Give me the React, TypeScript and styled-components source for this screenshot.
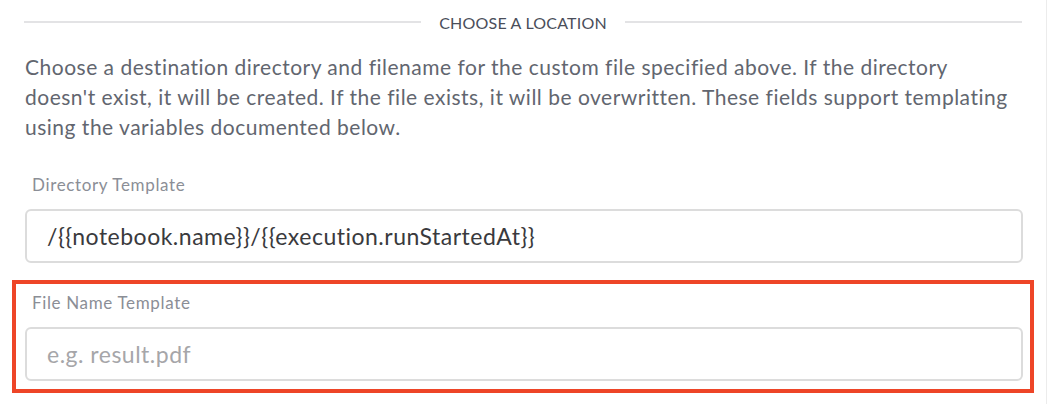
import React from "react";
import styled, { createGlobalStyle } from "styled-components";

const Global = createGlobalStyle`
  html, body { margin: 0; padding: 0; background: #ffffff; }
  body { font-family: "Lato", "Noto Sans", sans-serif; }
  * { box-sizing: border-box; }
`;

const Page = styled.div`
  width: 1047px;
  height: 404px;
  border-right: 1px solid #ececec;
  padding: 12px 24px 0 24px;
  display: flex;
  flex-direction: column;
`;

const SectionHeading = styled.div`
  display: flex;
  align-items: center;
  gap: 18px;
  height: 20px;
  &::before,
  &::after {
    content: "";
    flex: 1;
    height: 2px;
    background: #e3e3e5;
  }
`;

const HeadingText = styled.span`
  font-size: 16px;
  letter-spacing: 0.2px;
  color: #4a4e5a;
  text-transform: uppercase;
  white-space: nowrap;
`;

const Description = styled.p`
  margin: 20px 0 0 1px;
  max-width: 992px;
  font-size: 21px;
  letter-spacing: 0.5px;
  line-height: 30px;
  color: #62666f;
`;

const Fields = styled.div`
  display: flex;
  flex-direction: column;
  gap: 29px;
  margin-top: 32px;
`;

const Field = styled.div<{ $highlight?: boolean }>`
  display: flex;
  flex-direction: column;
  gap: 13px;
  outline: ${(p) => (p.$highlight ? "4px solid #ee4527" : "none")};
  outline-offset: 8px;
`;

const Label = styled.label`
  padding-left: 8px;
  font-size: 17px;
  letter-spacing: 0.65px;
  line-height: 22px;
  color: #8b8e96;
`;

const Input = styled.input`
  width: 100%;
  height: 54px;
  margin-left: 1px;
  padding: 0 20px;
  border: 2px solid #dcdcdc;
  border-radius: 6px;
  font-family: "Lato", "Noto Sans", sans-serif;
  font-size: 23px;
  letter-spacing: 0.5px;
  color: #3a3a3d;
  background: #ffffff;
  outline: none;
  &::placeholder {
    color: #a6a6a9;
  }
`;

export default function App() {
  return (
    <>
      <Global />
      <Page>
        <SectionHeading>
          <HeadingText>Choose a location</HeadingText>
        </SectionHeading>
        <Description>
          Choose a destination directory and filename for the custom file specified above. If the directory
          doesn't exist, it will be created. If the file exists, it will be overwritten. These fields support
          templating using the variables documented below.
        </Description>
        <Fields>
          <Field>
            <Label>Directory Template</Label>
            <Input readOnly value="/{{notebook.name}}/{{execution.runStartedAt}}" />
          </Field>
          <Field $highlight>
            <Label>File Name Template</Label>
            <Input readOnly placeholder="e.g. result.pdf" />
          </Field>
        </Fields>
      </Page>
    </>
  );
}
